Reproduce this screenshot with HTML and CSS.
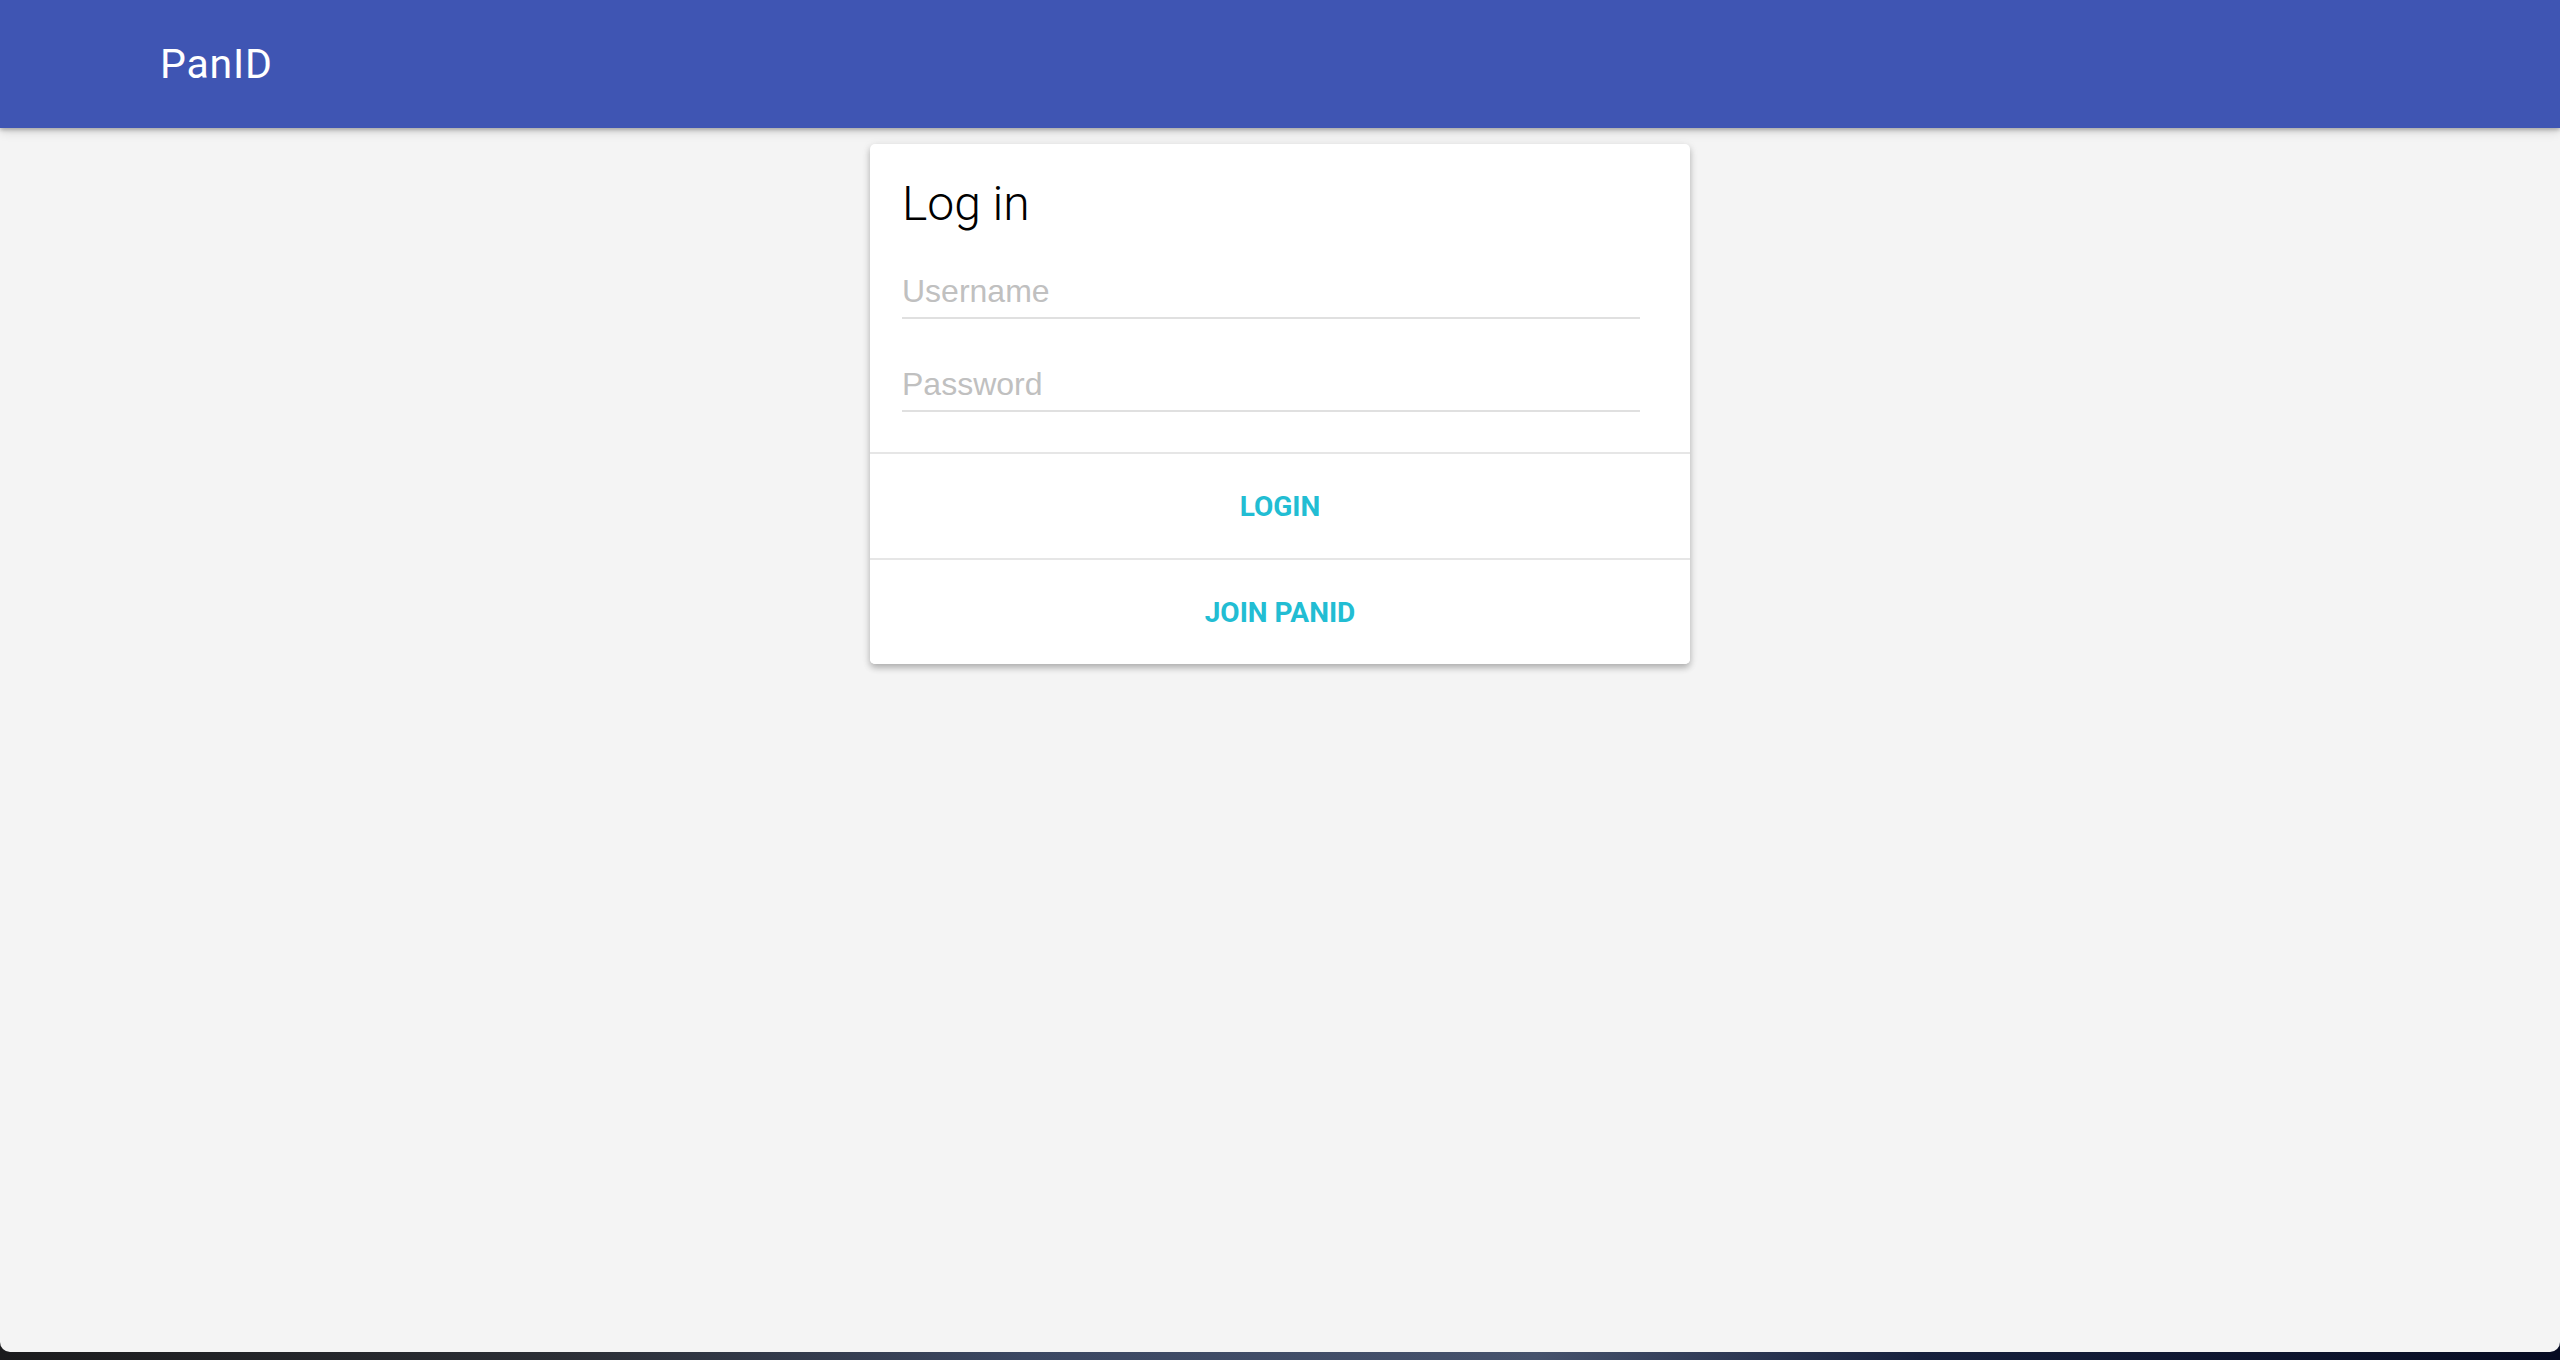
FILE: index.html
```html
<!DOCTYPE html>
<html lang="en">
<head>
  <meta charset="UTF-8" />
  <meta name="viewport" content="width=device-width, initial-scale=1.0"/>
  <title>PanID - Log in</title>
  <link rel="stylesheet" href="styles.css">
</head>
<body>
  <!-- App window -->
  <div class="window">
    <!-- Toolbar -->
    <header class="toolbar">
      <span class="toolbar-title">PanID</span>
    </header>

    <!-- Login card -->
    <main class="content">
      <div class="card">
        <form class="card-body">
          <h2 class="card-title">Log in</h2>
          <input class="field" type="text" placeholder="Username" />
          <input class="field" type="password" placeholder="Password" />
        </form>
        <button class="card-action" type="button">Login</button>
        <button class="card-action" type="button">Join PanID</button>
      </div>
    </main>
  </div>
</body>
</html>
```

FILE: styles.css
```css
/* Reset & base styles */
* {
  margin: 0;
  padding: 0;
  box-sizing: border-box;
}
html, body {
  width: 100%;
  height: 100%;
  overflow: hidden;
}
body {
  font-family: Roboto, "Noto Sans", sans-serif;
  /* desktop peeking out under the window */
  background: linear-gradient(90deg, #1b1b1d 0%, #2b2e35 22%, #3b4762 40%, #46526c 60%, #16203d 75%, #060b22 100%);
}

/* Window */
.window {
  height: 1352px;
  background: #f4f4f4;
  border-radius: 0 0 10px 10px;
  overflow: hidden;
}

/* Toolbar */
.toolbar {
  position: relative;
  z-index: 2;
  height: 128px;
  display: flex;
  align-items: center;
  padding-left: 160px;
  background: #3f55b3;
  box-shadow: 0 2px 4px rgba(0,0,0,0.25), 0 4px 10px rgba(0,0,0,0.12);
}
.toolbar-title {
  color: #fff;
  font-size: 41px;
  font-weight: 400;
  letter-spacing: 0.8px;
}

/* Card */
.content {
  padding-top: 16px;
}
.card {
  width: 820px;
  margin: 0 auto;
  background: #fff;
  border-radius: 5px;
  box-shadow: 0 4px 6px rgba(0,0,0,0.22), 0 2px 10px rgba(0,0,0,0.10);
  overflow: hidden;
}
.card-body {
  display: flex;
  flex-direction: column;
  padding: 32px 32px 40px;
}
.card-title {
  font-size: 48px;
  font-weight: 300;
  line-height: 56px;
  color: #000;
  margin-bottom: 33px;
}
.field {
  width: 738px;
  height: 54px;
  border: none;
  border-bottom: 2px solid #e0e0e0;
  outline: none;
  background: transparent;
  font-family: "Liberation Sans", Arial, sans-serif;
  font-size: 32px;
  color: #222;
}
.field + .field {
  margin-top: 39px;
}
.field::placeholder {
  color: #c0c0c0;
}

/* Card actions */
.card-action {
  display: flex;
  align-items: center;
  justify-content: center;
  width: 100%;
  height: 106px;
  border: none;
  border-top: 2px solid #e6e6e6;
  background: #fff;
  color: #22bdd3;
  font-family: Roboto, sans-serif;
  font-size: 28px;
  font-weight: 700;
  text-transform: uppercase;
  cursor: pointer;
}
```
